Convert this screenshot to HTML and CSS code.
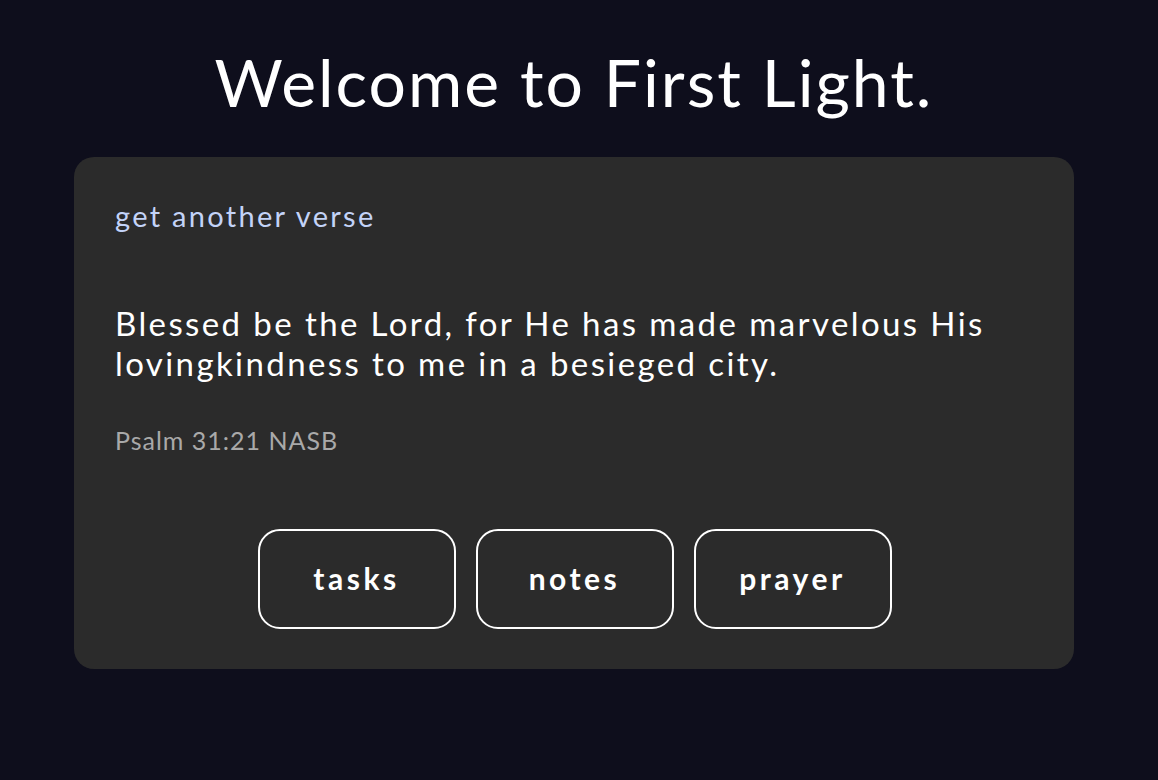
FILE: index.html
```html
<!DOCTYPE html>
<html lang="en">
<head>
<meta charset="utf-8">
<title>First Light</title>
<link rel="stylesheet" href="styles.css">
</head>
<body>
<main class="page">
  <h1 class="title">Welcome to First Light.</h1>
  <section class="card">
    <a class="another" href="#">get another verse</a>
    <p class="verse">Blessed be the Lord, for He has made marvelous His lovingkindness to me in a besieged city.</p>
    <p class="ref">Psalm 31:21 NASB</p>
    <nav class="actions">
      <button class="btn">tasks</button>
      <button class="btn">notes</button>
      <button class="btn">prayer</button>
    </nav>
  </section>
</main>
</body>
</html>
```
FILE: styles.css
```css
html, body {
  margin: 0;
  padding: 0;
  background: #0e0e1c;
  height: 100%;
}
body {
  font-family: "Lato", "Noto Sans", sans-serif;
  color: #ffffff;
}
.page {
  display: flex;
  flex-direction: column;
  align-items: center;
  padding-top: 44px;
  padding-right: 10px;
}
.title {
  margin: 0;
  font-size: 66px;
  font-weight: 400;
  line-height: 76px;
  letter-spacing: 2px;
}
.card {
  box-sizing: border-box;
  width: 1000px;
  margin-top: 37px;
  background: #2b2b2b;
  border-radius: 20px;
  padding: 40px 40px 40px 41px;
  display: flex;
  flex-direction: column;
  align-items: flex-start;
}
.another {
  color: #c3d3f8;
  text-decoration: none;
  font-size: 29px;
  line-height: 38px;
  letter-spacing: 2.3px;
}
.verse {
  margin: 68px 0 0;
  font-size: 33px;
  line-height: 40px;
  letter-spacing: 2.4px;
}
.ref {
  margin: 41px 0 0;
  color: #a9a9a9;
  font-size: 25px;
  line-height: 32px;
  letter-spacing: 1px;
}
.actions {
  align-self: stretch;
  display: flex;
  justify-content: center;
  gap: 20px;
  margin-top: 73px;
}
.btn {
  box-sizing: border-box;
  width: 198px;
  height: 100px;
  background: transparent;
  border: 2px solid #ffffff;
  border-radius: 22px;
  color: #ffffff;
  font-family: inherit;
  font-size: 30px;
  font-weight: 700;
  letter-spacing: 3.5px;
  padding: 0 0 2px;
}
```
